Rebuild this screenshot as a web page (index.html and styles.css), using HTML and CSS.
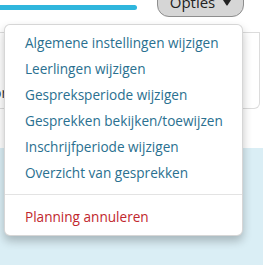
FILE: index.html
```html
<!DOCTYPE html>
<html lang="nl">
<head>
<meta charset="utf-8">
<link rel="stylesheet" href="styles.css">
</head>
<body>
<div class="page">
  <div class="topbar">
    <div class="progress"></div>
    <button class="btn">Opties <svg class="caret" width="12" height="9" viewBox="0 0 12 9"><path d="M1 1.5 Q6 -0.5 11 1.5 L6.6 8.2 Q6 9 5.4 8.2 Z" fill="#222"/></svg></button>
  </div>
  <div class="card">
    <p class="frag">Jou</p>
    <p class="frag">door</p>
  </div>
  <div class="gap"></div>
  <div class="blue"></div>

  <ul class="menu">
    <li><a class="item">Algemene instellingen wijzigen</a></li>
    <li><a class="item">Leerlingen wijzigen</a></li>
    <li><a class="item">Gespreksperiode wijzigen</a></li>
    <li><a class="item">Gesprekken bekijken/toewijzen</a></li>
    <li><a class="item">Inschrijfperiode wijzigen</a></li>
    <li><a class="item">Overzicht van gesprekken</a></li>
    <li class="divider"></li>
    <li><a class="item danger">Planning annuleren</a></li>
  </ul>
</div>
</body>
</html>
```
FILE: styles.css
```css
html, body {
  margin: 0;
  padding: 0;
  background: #ffffff;
  overflow: hidden;
}
body {
  font-family: "Open Sans", "Noto Sans", sans-serif;
  font-size: 14px;
  color: #333;
}
.page {
  position: relative;
  width: 263px;
  height: 265px;
  display: flex;
  flex-direction: column;
}
.topbar {
  display: flex;
  align-items: flex-start;
  height: 32px;
  flex: none;
}
.progress {
  width: 137px;
  height: 5px;
  margin-top: 5px;
  background: #2fb6dd;
  border-radius: 0 3px 3px 0;
}
.btn {
  margin-left: 20px;
  margin-top: -14px;
  width: 87px;
  height: 31px;
  box-sizing: border-box;
  border: 1px solid #8e8e8e;
  border-radius: 12px;
  background: #d6d6d6;
  font-family: inherit;
  font-size: 15px;
  color: #222;
  padding: 0 0 0 2px;
  display: flex;
  align-items: center;
  justify-content: center;
  gap: 6px;
}
.caret {
  display: block;
}
.card {
  flex: none;
  height: 77px;
  box-sizing: border-box;
  margin-right: 3px;
  border: 1px solid #dcdcdc;
  border-left: none;
  border-radius: 0 0 6px 0;
  background: #fff;
  padding-top: 37px;
}
.frag {
  margin: 0 0 0 -24px;
  line-height: 15px;
  font-size: 14px;
  color: #333;
}
.gap {
  flex: none;
  height: 39px;
}
.blue {
  flex: 1;
  background: #daeef5;
}
.menu {
  position: absolute;
  left: 4px;
  top: 24px;
  width: 239px;
  box-sizing: border-box;
  margin: 0;
  padding: 5px 0;
  list-style: none;
  background: #fff;
  border: 1px solid rgba(0, 0, 0, 0.16);
  border-radius: 6px;
  box-shadow: 0 5px 10px rgba(0, 0, 0, 0.24);
}
.item {
  display: block;
  height: 26px;
  line-height: 26px;
  padding-left: 20px;
  font-size: 13.6px;
  color: #2a7090;
  white-space: nowrap;
}
.item.danger {
  color: #c1272d;
}
.divider {
  height: 1px;
  margin: 8px 0 9px;
  background: #e3e3e3;
}
```
